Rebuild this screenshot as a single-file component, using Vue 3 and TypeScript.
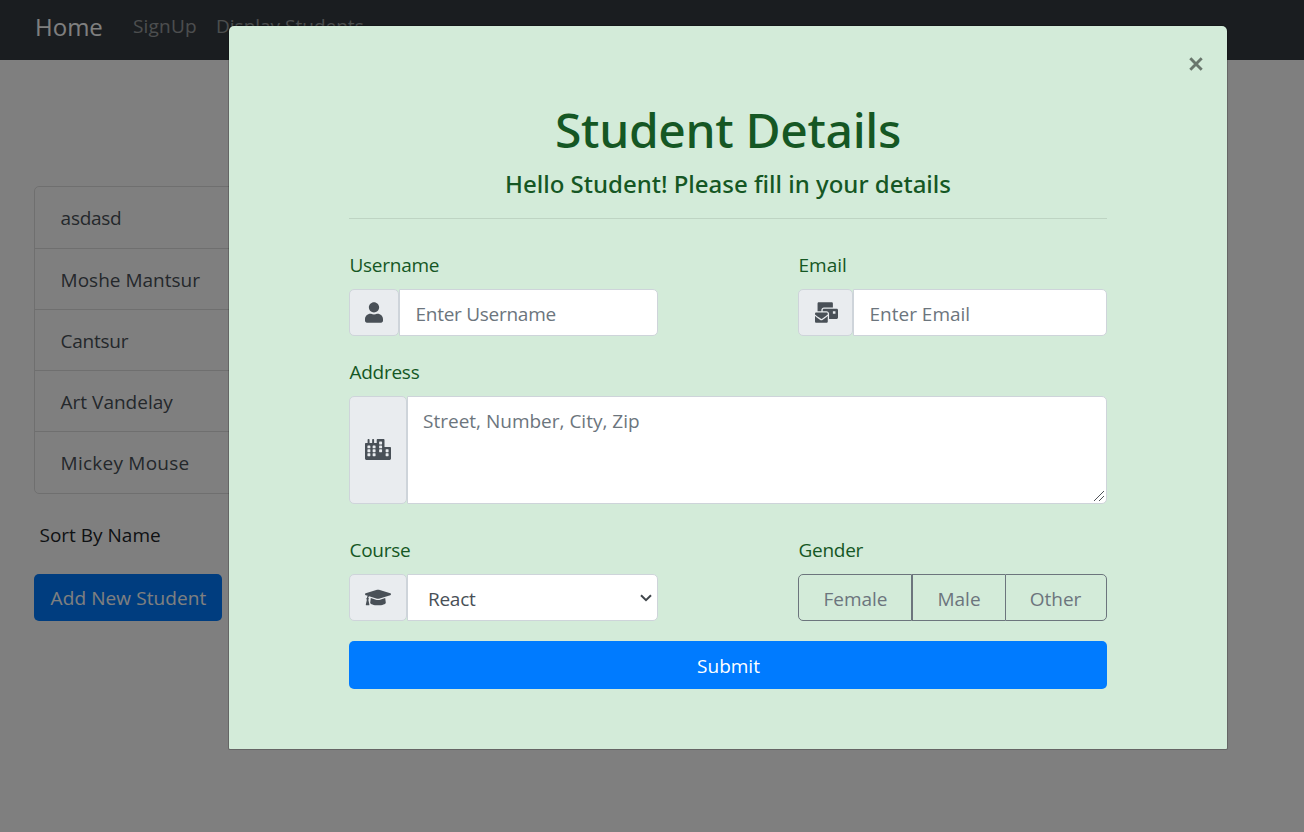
<script setup lang="ts">
import { ref } from 'vue'

interface Student {
  name: string
  spacing?: 'tight' | 'loose'
}

const students: Student[] = [
  { name: 'asdasd', spacing: 'tight' },
  { name: 'Moshe Mantsur' },
  { name: 'Cantsur', spacing: 'tight' },
  { name: 'Art Vandelay' },
  { name: 'Mickey Mouse', spacing: 'loose' },
]
const genders = ['Female', 'Male', 'Other']

const username = ref('')
const email = ref('')
const address = ref('')
const course = ref('React')
const gender = ref('')

// Window positions of the city icon, in its 640 x 512 box.
const cityWindows: [number, number][] = [
  [60, 156], [60, 252], [60, 348],
  [188, 156], [188, 252], [188, 348],
  [348, 60], [348, 156], [348, 252],
  [508, 252], [508, 348],
]
</script>

<template>
  <div class="page">
    <nav class="navbar">
      <a class="brand">Home</a>
      <a class="nav-link signup">SignUp</a>
      <a class="nav-link">Display Students</a>
    </nav>

    <main class="content">
      <ul class="list">
        <li v-for="s in students" :key="s.name" :class="s.spacing">{{ s.name }}</li>
      </ul>
      <div class="sort">Sort By Name</div>
      <button class="add" type="button">Add New Student</button>
    </main>

    <div class="backdrop">
      <section class="modal">
        <button class="close" type="button" aria-label="Close">
          <svg width="14" height="14" viewBox="0 0 14 14">
            <path d="M1.3 1.3 12.7 12.7M12.7 1.3 1.3 12.7" fill="none" stroke="currentColor" stroke-width="2.9" />
          </svg>
        </button>

        <h1>Student Details</h1>
        <h2>Hello Student! Please fill in your details</h2>
        <hr />

        <form @submit.prevent>
          <div class="row first">
            <div class="field">
              <label class="tight">Username</label>
              <div class="group">
                <span class="addon">
                  <svg class="icon" width="18" viewBox="0 0 448 512">
                    <path d="M224 256c70.7 0 128-57.3 128-128S294.7 0 224 0 96 57.3 96 128s57.3 128 128 128zm89.6 32h-16.7c-22.2 10.2-46.9 16-72.9 16s-50.6-5.8-72.9-16h-16.7C60.2 288 0 348.2 0 422.4V464c0 26.5 21.5 48 48 48h352c26.5 0 48-21.5 48-48v-41.6c0-74.2-60.2-134.4-134.4-134.4z" />
                  </svg>
                </span>
                <input v-model="username" class="tight" type="text" placeholder="Enter Username" />
              </div>
            </div>
            <div class="field">
              <label>Email</label>
              <div class="group">
                <span class="addon mail">
                  <svg class="icon" width="23" viewBox="0 0 576 512">
                    <path d="M160 448c-25.6 0-51.2-22.4-64-32-64-44.8-83.2-60.8-96-70.4V480c0 17.67 14.33 32 32 32h256c17.67 0 32-14.33 32-32V345.6c-12.8 9.6-32 25.6-96 70.4-12.8 9.6-38.4 32-64 32zm128-192H32c-17.67 0-32 14.33-32 32v16c25.6 19.2 22.4 19.2 115.2 86.4 9.6 6.4 28.8 25.6 44.8 25.6s35.2-19.2 44.8-22.4c92.8-67.2 89.6-67.2 115.2-86.4V288c0-17.67-14.33-32-32-32zm256-96H224c-17.67 0-32 14.33-32 32v32h96c33.21 0 60.59 25.42 63.71 57.82l.29-.22V416h192c17.67 0 32-14.33 32-32V192c0-17.67-14.33-32-32-32zm-32 128h-64v-64h64v64zm-352-96c0-35.29 28.71-64 64-64h224V32c0-17.67-14.33-32-32-32H96C78.33 0 64 14.33 64 32v192h96v-32z" />
                  </svg>
                </span>
                <input v-model="email" type="text" placeholder="Enter Email" />
              </div>
            </div>
          </div>

          <div class="field address">
            <label class="tight">Address</label>
            <div class="group">
              <span class="addon">
                <svg class="icon" width="26" viewBox="0 0 640 512">
                  <path d="M616 192H480V24c0-13.26-10.74-24-24-24H312c-13.26 0-24 10.74-24 24v72h-64V16c0-8.84-7.16-16-16-16h-16c-8.84 0-16 7.16-16 16v80h-64V16c0-8.84-7.16-16-16-16H80c-8.84 0-16 7.16-16 16v80H24c-13.26 0-24 10.74-24 24v360c0 17.67 14.33 32 32 32h576c17.67 0 32-14.33 32-32V216c0-13.26-10.75-24-24-24z" />
                  <rect
                    v-for="[x, y] in cityWindows"
                    :key="`${x}-${y}`"
                    class="window"
                    :x="x"
                    :y="y"
                    width="72"
                    height="72"
                    rx="12"
                  />
                </svg>
              </span>
              <textarea v-model="address" placeholder="Street, Number, City, Zip"></textarea>
              <svg class="grip" width="12" height="12" viewBox="0 0 12 12">
                <path d="M1 11 11 1M6 11 11 6" fill="none" stroke="#50555a" stroke-width="1" />
              </svg>
            </div>
          </div>

          <div class="row">
            <div class="field">
              <label class="tight">Course</label>
              <div class="group">
                <span class="addon">
                  <svg class="icon" width="26" viewBox="0 0 640 512">
                    <path d="M622.34 153.2L343.4 67.5c-15.2-4.67-31.6-4.67-46.79 0L17.66 153.2c-23.54 7.23-23.54 38.36 0 45.59l48.63 14.94c-10.67 13.19-17.23 29.28-17.88 46.9C38.78 266.15 32 276.11 32 288c0 10.78 5.68 19.85 13.86 25.65L20.33 428.53C18.11 438.52 25.71 448 35.94 448h56.11c10.24 0 17.84-9.48 15.62-19.47L82.14 313.65C90.32 307.85 96 298.78 96 288c0-11.57-6.47-21.25-15.66-26.87.76-15.02 8.44-28.3 20.69-36.72L296.6 284.5c9.06 2.78 26.44 6.25 46.79 0l278.95-85.7c23.55-7.24 23.55-38.36 0-45.6zM352.79 315.09c-28.53 8.76-52.84 3.92-65.59 0l-145.02-44.55L128 384c0 35.35 85.96 64 192 64s192-28.65 192-64l-14.18-113.47-145.03 44.56z" />
                  </svg>
                </span>
                <button class="select tight" type="button">
                  <span>{{ course }}</span>
                  <svg width="12" height="8" viewBox="0 0 12 8">
                    <path d="M1 1.2 6 6.2 11 1.2" fill="none" stroke="#40464b" stroke-width="2" />
                  </svg>
                </button>
              </div>
            </div>
            <div class="field">
              <label class="tight">Gender</label>
              <div class="genders">
                <button v-for="g in genders" :key="g" type="button" :class="g.toLowerCase()" @click="gender = g">
                  {{ g }}
                </button>
              </div>
            </div>
          </div>

          <button class="submit" type="submit">Submit</button>
        </form>
      </section>
    </div>
  </div>
</template>

<style>
html,
body {
  margin: 0;
  overflow: hidden;
}
</style>

<style scoped>
.page,
.page * {
  box-sizing: border-box;
}
.page {
  position: relative;
  height: 832px;
  overflow: hidden;
  background: #fff;
  color: #212529;
  font-family: 'Open Sans', 'Noto Sans', sans-serif;
  font-size: 19px;
  line-height: 30px;
}
button,
input,
textarea {
  margin: 0;
  font: inherit;
  letter-spacing: inherit;
}
.page .tight {
  letter-spacing: -0.27px;
}
.page .loose {
  letter-spacing: 0.24px;
}

.navbar {
  display: flex;
  align-items: center;
  height: 60px;
  padding: 0 35px 8px;
  background: #343a40;
  white-space: nowrap;
}
.brand {
  width: 98px;
  padding-top: 1px;
  color: #fff;
  font-size: 24px;
}
.nav-link {
  color: rgba(255, 255, 255, 0.5);
}
.signup {
  width: 83px;
  letter-spacing: 0.19px;
}

.content {
  padding: 126px 34px 0;
}
.list {
  width: 900px;
  margin: 0;
  padding: 0;
  list-style: none;
  border: 1px solid #dfdfdf;
  border-radius: 5px;
  color: #495057;
}
.list li {
  height: 61px;
  padding: 16px 25.6px 0;
}
.list li:last-child {
  height: 62px;
}
.list li + li {
  border-top: 1px solid #dfdfdf;
}
.sort {
  margin-top: 26px;
  padding-left: 5.5px;
}
.add {
  width: 188px;
  height: 47px;
  margin-top: 24px;
  padding: 0 0 0 1px;
  border: 0;
  border-radius: 5px;
  background: #007bff;
  color: #fff;
  letter-spacing: 0.1px;
}

.backdrop {
  position: absolute;
  inset: 0;
  padding: 26px 0 0 229px;
  background: rgba(0, 0, 0, 0.5);
}
.modal {
  position: relative;
  width: 998px;
  height: 723px;
  padding: 74px 120px 0;
  border-radius: 5px 5px 1px 1px;
  background: #d3ebd9;
  box-shadow: 0 0 0 1px rgba(0, 0, 0, 0.2);
  color: #155724;
}
.close {
  position: absolute;
  top: 31px;
  right: 24px;
  display: flex;
  padding: 0;
  border: 0;
  background: none;
  color: #69766c;
}
h1,
h2 {
  margin: 0;
  font-family: 'Noto Sans', 'Open Sans', sans-serif;
  font-weight: 500;
  text-align: center;
}
h1 {
  font-size: 48px;
  line-height: 60px;
  letter-spacing: -0.33px;
}
h2 {
  margin-top: 9px;
  font-size: 24px;
  line-height: 30px;
}
hr {
  height: 1px;
  margin: 19px 0 0;
  border: 0;
  background: #bed4c3;
}

.row {
  display: flex;
  justify-content: space-between;
}
.first {
  margin-top: 31px;
}
.row .field {
  width: 309px;
}
label {
  display: block;
  height: 39px;
  padding-left: 0.5px;
}
.group {
  position: relative;
  display: flex;
  height: 47px;
}
.addon {
  display: flex;
  align-items: center;
  justify-content: center;
  flex: none;
  padding: 0 15px;
  border: 1px solid #ced4da;
  border-radius: 5px;
  background: #e9ecef;
}
.mail {
  padding: 0 14.5px 0 15.5px;
}
.icon {
  height: 21px;
  fill: #495057;
}
.icon .window {
  fill: #e9ecef;
}
input,
textarea,
.select {
  display: block;
  flex: 1;
  min-width: 0;
  border: 1px solid #ced4da;
  border-radius: 0 5px 5px 0;
  outline: 0;
  background: #fff;
  color: #495057;
}
input {
  padding: 2px 15.5px 0;
}
textarea {
  height: 108px;
  padding: 9px 15px;
  resize: none;
}
input::placeholder,
textarea::placeholder {
  color: #6c757d;
  opacity: 1;
}
.grip {
  position: absolute;
  right: 2px;
  bottom: 2px;
}
.address {
  margin-top: 21px;
}
.address .group {
  height: 108px;
}
.address .addon {
  padding-bottom: 2px;
}
.address + .row {
  margin-top: 31px;
}
.select {
  display: flex;
  align-items: center;
  justify-content: space-between;
  padding: 2px 5px 0 20px;
}
.select svg {
  margin-top: -2px;
}
.genders {
  display: flex;
  height: 47px;
}
.genders button {
  padding: 2px 0 0;
  border: 1px solid #6c757d;
  background: none;
  color: #6c757d;
}
.genders .female {
  width: 114px;
  padding-left: 1px;
  border-radius: 5px 0 0 5px;
}
.genders .male {
  width: 93px;
  border-right: 0;
}
.genders .other {
  width: 102px;
  padding-right: 1px;
  border-radius: 0 5px 5px 0;
}
.submit {
  display: block;
  width: 100%;
  height: 48px;
  margin-top: 20px;
  padding: 2px 0 0 1px;
  border: 0;
  border-radius: 5px;
  background: #007bff;
  color: #fff;
}
</style>
